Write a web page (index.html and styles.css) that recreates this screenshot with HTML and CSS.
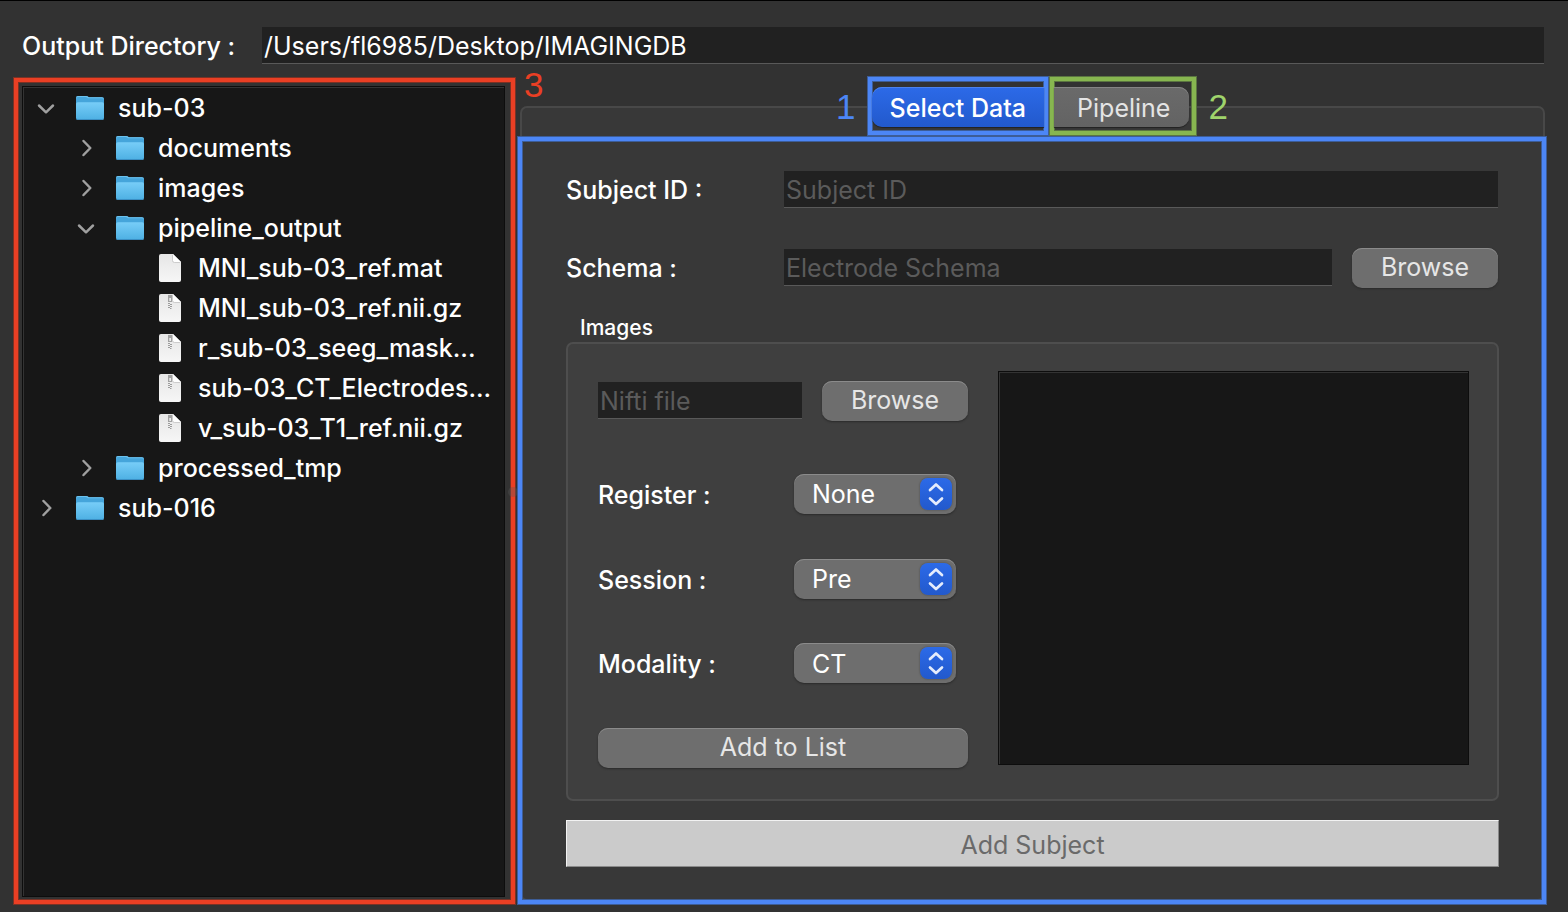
FILE: index.html
```html
<!DOCTYPE html>
<html lang="en">
<head>
<meta charset="utf-8">
<meta name="viewport" content="width=device-width, initial-scale=1">
<title>Imaging Database</title>
<link rel="stylesheet" href="styles.css">
</head>
<body>
<svg class="defs" width="0" height="0" aria-hidden="true">
  <defs>
    <linearGradient id="folder-face" x1="0" y1="0" x2="0" y2="1">
      <stop offset="0" stop-color="#77cdf8"/>
      <stop offset="1" stop-color="#4db0e3"/>
    </linearGradient>
    <linearGradient id="paper" x1="0" y1="0" x2="0" y2="1">
      <stop offset="0" stop-color="#e6e6e6"/>
      <stop offset="1" stop-color="#f6f6f6"/>
    </linearGradient>
    <symbol id="folder" viewBox="0 0 28 24">
      <path d="M0 2Q0 0 2 0H10Q11.500 0 12.500 1L13 1.300H26Q28 1.300 28 3.300V12H0Z" fill="#45a5db"/>
      <path d="M0 2Q0 0 2 0H10Q11.500 0 12.500 1L13 1.300H26Q28 1.300 28 3.300V4Q28 2.300 26 2.300H12L11 1.500Q10.500 1 9.500 1H2Q0 1 0 3Z" fill="#6cc2ee"/>
      <path d="M0 8Q0 6.300 1.800 6.300H26.200Q28 6.300 28 8V22Q28 24 26 24H2Q0 24 0 22Z" fill="url(#folder-face)"/>
      <path d="M0 22Q0 24 2 24H26Q28 24 28 22Q28 23 26 23H2Q0 23 0 22Z" fill="#3b8fc4"/>
    </symbol>
    <symbol id="file" viewBox="0 0 22 28">
      <path d="M2 0H14L22 8V26Q22 28 20 28H2Q0 28 0 26V2Q0 0 2 0Z" fill="url(#paper)"/>
      <path d="M14 0L22 8H15.500Q14 8 14 6.500Z" fill="#fff"/>
      <path d="M13.500 1V6.500Q13.500 8.500 15.500 8.500H21" fill="none" stroke="#c4c4c4" stroke-width=".8"/>
    </symbol>
    <symbol id="archive" viewBox="0 0 22 28">
      <use href="#file" width="22" height="28"/>
      <path d="M9 1H13V8H9Z" fill="#a2a2a2"/>
      <path d="M10.300 4H12V7H10.300Z" fill="#eee"/>
      <path d="M9 9.500H11M11 10.500H13M9 11.500H11M11 12.500H13M9 13.500H11M11 14.500H12.500" stroke="#9c9c9c" stroke-width="1"/>
    </symbol>
    <symbol id="chevron" viewBox="0 0 18 18">
      <path d="M6.500 2L13.300 9L6.500 16" fill="none" stroke="#a0a0a0" stroke-width="2.500" stroke-linecap="round" stroke-linejoin="round"/>
    </symbol>
    <symbol id="updown" viewBox="0 0 32 32">
      <path d="M10 12L16 6.500L22 12M10 20.500L16 26L22 20.500" fill="none" stroke="#e4ecfc" stroke-width="2.700" stroke-linecap="round" stroke-linejoin="round"/>
    </symbol>
  </defs>
</svg>

<div class="window">
  <header class="output">
    <label for="output">Output Directory :</label>
    <input class="field" id="output" type="text" value="/Users/fl6985/Desktop/IMAGINGDB">
  </header>

  <main class="main">
    <nav class="mark mark-red browser" aria-label="Files">
      <ul class="tree">
        <li>
          <div class="node"><button class="toggle open" aria-label="Collapse sub-03"><svg><use href="#chevron"/></svg></button><svg class="folder"><use href="#folder"/></svg><span>sub-03</span></div>
          <ul>
            <li><div class="node"><button class="toggle" aria-label="Expand documents"><svg><use href="#chevron"/></svg></button><svg class="folder"><use href="#folder"/></svg><span>documents</span></div></li>
            <li><div class="node"><button class="toggle" aria-label="Expand images"><svg><use href="#chevron"/></svg></button><svg class="folder"><use href="#folder"/></svg><span>images</span></div></li>
            <li>
              <div class="node"><button class="toggle open" aria-label="Collapse pipeline_output"><svg><use href="#chevron"/></svg></button><svg class="folder"><use href="#folder"/></svg><span>pipeline_output</span></div>
              <ul>
                <li><div class="node leaf"><svg class="file"><use href="#file"/></svg><span>MNI_sub-03_ref.mat</span></div></li>
                <li><div class="node leaf"><svg class="file"><use href="#archive"/></svg><span>MNI_sub-03_ref.nii.gz</span></div></li>
                <li><div class="node leaf"><svg class="file"><use href="#archive"/></svg><span>r_sub-03_seeg_mask...</span></div></li>
                <li><div class="node leaf"><svg class="file"><use href="#archive"/></svg><span>sub-03_CT_Electrodes...</span></div></li>
                <li><div class="node leaf"><svg class="file"><use href="#archive"/></svg><span>v_sub-03_T1_ref.nii.gz</span></div></li>
              </ul>
            </li>
            <li><div class="node"><button class="toggle" aria-label="Expand processed_tmp"><svg><use href="#chevron"/></svg></button><svg class="folder"><use href="#folder"/></svg><span>processed_tmp</span></div></li>
          </ul>
        </li>
        <li><div class="node"><button class="toggle" aria-label="Expand sub-016"><svg><use href="#chevron"/></svg></button><svg class="folder"><use href="#folder"/></svg><span>sub-016</span></div></li>
      </ul>
      <span class="splitter"></span>
    </nav>

    <section class="workspace">
      <span class="number number-red">3</span>
      <div class="tabs">
        <span class="number number-blue">1</span>
        <div class="mark mark-blue tab-box"><button class="tab tab-active">Select Data</button></div>
        <div class="mark mark-green tab-box"><button class="tab tab-last">Pipeline</button></div>
        <span class="number number-green">2</span>
      </div>

      <form class="mark mark-blue panel">
        <div class="row">
          <label for="subject">Subject ID :</label>
          <input class="field" id="subject" type="text" placeholder="Subject ID">
        </div>
        <div class="row">
          <label for="schema">Schema :</label>
          <input class="field" id="schema" type="text" placeholder="Electrode Schema">
          <button class="button browse" type="button">Browse</button>
        </div>

        <h2 class="group-title" id="images-title">Images</h2>
        <div class="group" role="group" aria-labelledby="images-title">
          <div class="controls">
            <div class="control nifti">
              <input class="field" type="text" placeholder="Nifti file" aria-label="Nifti file">
              <button class="button browse" type="button">Browse</button>
            </div>
            <div class="control choice">
              <label for="register">Register :</label>
              <div class="select"><select id="register"><option>None</option></select><svg><use href="#updown"/></svg></div>
            </div>
            <div class="control choice">
              <label for="session">Session :</label>
              <div class="select"><select id="session"><option>Pre</option><option>Post</option></select><svg><use href="#updown"/></svg></div>
            </div>
            <div class="control choice">
              <label for="modality">Modality :</label>
              <div class="select"><select id="modality"><option>CT</option></select><svg><use href="#updown"/></svg></div>
            </div>
            <button class="button" type="button">Add to List</button>
          </div>
          <div class="list"></div>
        </div>

        <button class="add-subject" type="button" disabled>Add Subject</button>
      </form>
    </section>
  </main>
</div>
</body>
</html>
```

FILE: styles.css
```css
* {
  box-sizing: border-box;
}

body {
  margin: 0;
  background: #323232;
  color: #fff;
  font: 25px/32px Inter, "Liberation Sans", sans-serif;
}

button,
input,
select {
  margin: 0;
  border: 0;
  padding: 0;
  color: inherit;
  font: inherit;
}

ul {
  margin: 0;
  padding: 0;
  list-style: none;
}

svg {
  display: block;
}

label,
.node,
.group-title,
.tab-active {
  font-weight: 500;
}

.defs {
  position: absolute;
}

.window {
  display: flex;
  flex-direction: column;
  min-height: 100vh;
  border-top: 1px solid #000;
  padding: 26px 22px 8px 14px;
}

.output {
  display: flex;
  align-items: center;
  padding: 0 2px 0 8px;
}

.output label {
  width: 240px;
  flex: none;
}

.field {
  flex: 1;
  min-width: 0;
  width: 100%;
  height: 37px;
  border-bottom: 1px solid #595959;
  padding: 2px 2px 0;
  background: #212121;
}

.field::placeholder {
  color: #5b5b5b;
  opacity: 1;
}

.main {
  display: grid;
  flex: 1;
  grid-template-columns: 501px 1fr;
  gap: 3px;
  padding-top: 13px;
}

/* Numbered outlines */

.mark {
  border: 4px solid;
}

.mark-red {
  border-color: #ea3f24;
  box-shadow: 0 0 0 1px #7a3225, inset 0 0 0 1px #7a3225;
}

.mark-blue {
  border-color: #4c86f6;
  box-shadow: 0 0 0 1px #3d5d97, inset 0 0 0 1px #3d5d97;
}

.mark-green {
  border-color: #87b650;
  box-shadow: 0 0 0 1px #5b7541, inset 0 0 0 1px #5b7541;
}

.number {
  font: 35px/40px "Liberation Sans", Arial, sans-serif;
}

.number-red {
  position: absolute;
  top: -12px;
  left: 6px;
  color: #ea3f24;
}

.number-blue {
  color: #4c86f6;
}

.number-green {
  color: #9fd46b;
}

/* File tree */

.browser {
  position: relative;
  display: flex;
  margin-top: 1px;
  padding: 4px 6px 3px 4px;
}

.tree {
  flex: 1;
  border: 1px solid #0d0d0d;
  background: #171717;
  box-shadow: inset 1px 1px 0 #333;
  padding: 1px 0 0 14px;
}

.tree ul {
  padding-left: 40px;
}

.node {
  display: flex;
  align-items: center;
  height: 40px;
  white-space: nowrap;
}

.node.leaf {
  padding-left: 42px;
}

.toggle {
  width: 18px;
  height: 18px;
  margin-right: 21px;
  background: none;
}

.toggle svg {
  width: 18px;
  height: 18px;
}

.toggle.open svg {
  transform: rotate(90deg);
}

.folder {
  width: 28px;
  height: 24px;
  margin-right: 14px;
}

.file {
  width: 22px;
  height: 28px;
  margin-right: 17px;
}

.splitter {
  position: absolute;
  top: calc(50% - 4px);
  right: -7px;
  width: 10px;
  height: 10px;
  border-radius: 5px;
  background: rgba(90, 90, 90, .35);
}

/* Workspace */

.workspace {
  position: relative;
  display: flex;
  flex-direction: column;
  gap: 2px;
}

.workspace::before {
  content: "";
  position: absolute;
  inset: 29px 1px 3px 2px;
  border: 2px solid #484848;
  border-radius: 7px;
  background: #383838;
}

.tabs {
  position: relative;
  display: flex;
  align-items: center;
  justify-content: center;
  gap: 2px;
}

.tabs .number {
  padding-top: 2px;
}

.tabs .number-blue {
  margin-right: 10px;
}

.tabs .number-green {
  margin-left: 10px;
}

.tab-box {
  padding: 6px 0 4px;
}

.tab-box.mark-green {
  padding-right: 3px;
}

.tab {
  display: block;
  height: 40px;
  padding: 2px 19px 0;
  border-radius: 0 10px 10px 0;
  background: linear-gradient(#6a6a6a, #636363);
  box-shadow: inset 0 1px 0 #858585, 0 1px 1px #222;
  color: #e4e4e4;
}

.tab-active {
  padding: 2px 18px 0;
  border-radius: 10px 0 0 10px;
  background: linear-gradient(#2c6ae8, #2259cc);
  box-shadow: inset 0 1px 0 #4c82ee, 0 1px 1px #222;
  color: #fff;
}

.tab-last {
  padding-left: 23px;
}

.panel {
  position: relative;
  display: flex;
  flex: 1;
  flex-direction: column;
  padding: 29px 43px 33px 44px;
}

.row {
  display: flex;
  align-items: center;
  height: 40px;
  margin-bottom: 38px;
  padding-right: 1px;
}

.row .field,
.nifti .field {
  margin-bottom: 2px;
}

.row label {
  width: 218px;
  flex: none;
}

.row + .row {
  margin-bottom: 25px;
}

.browse {
  flex: none;
  width: 146px;
  margin-left: 20px;
}

.button {
  height: 40px;
  border-radius: 10px;
  padding-bottom: 2px;
  background: #6e6e6e;
  box-shadow: inset 0 1px 0 #8b8b8b, 0 1px 2px #2a2a2a;
  color: #e6e6e6;
}

.group-title {
  margin: 0 0 0 14px;
  font-size: 21px;
  line-height: 29px;
}

.group {
  display: grid;
  flex: 1;
  grid-template-columns: minmax(0, 370fr) minmax(0, 471fr);
  gap: 30px;
  border: 2px solid #4e4e4e;
  border-radius: 7px;
  padding: 27px 28px 31px 30px;
  background: #3f3f3f;
}

.controls {
  display: flex;
  flex-direction: column;
  justify-content: space-between;
  padding-top: 10px;
}

.control {
  display: flex;
  align-items: center;
}

.nifti {
  margin-bottom: 8px;
}

.choice {
  justify-content: space-between;
  padding-right: 12px;
}

.choice label {
  padding-top: 2px;
}

.select {
  position: relative;
  width: 162px;
}

.select select {
  display: block;
  width: 100%;
  height: 40px;
  border-radius: 10px;
  padding: 1px 40px 0 18px;
  appearance: none;
  background: #6e6e6e;
  box-shadow: inset 0 1px 0 #8b8b8b, 0 1px 2px #2a2a2a;
}

.select svg {
  position: absolute;
  top: 4px;
  right: 4px;
  width: 32px;
  height: 32px;
  border-radius: 8px;
  background: linear-gradient(#2c6ae8, #2259cc);
  box-shadow: 0 0 2px #444;
  pointer-events: none;
}

.list {
  margin-bottom: 3px;
  border: 1px solid #0d0d0d;
  background: #171717;
  box-shadow: inset 1px 1px 0 #333;
}

.add-subject {
  height: 47px;
  margin-top: 19px;
  border: 1px solid;
  border-color: #f2f2f2 #8a8a8a #8a8a8a #f2f2f2;
  padding-top: 2px;
  background: #cbcbcb;
  color: #6a6a6a;
}
```
